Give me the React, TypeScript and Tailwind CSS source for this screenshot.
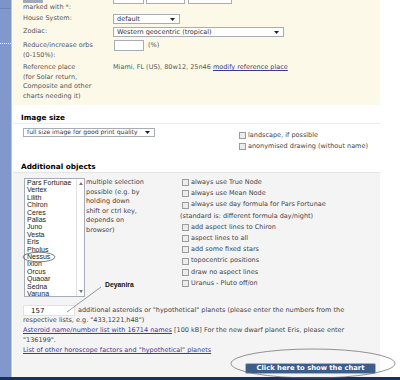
import React from "react";

const Arrow = () => (
  <svg width="5" height="3" viewBox="0 0 5 3" className="shrink-0">
    <path d="M0 0h5L2.5 3z" fill="#222" />
  </svg>
);

function Select({ value, className }: { value: string; className: string }) {
  return (
    <div
      className={`flex items-center justify-between border border-[#a9adb3] bg-white pl-[3px] pr-[4px] text-[#333] ${className}`}
    >
      <span className="truncate leading-none">{value}</span>
      <Arrow />
    </div>
  );
}

function Check({ children }: { children?: React.ReactNode }) {
  return (
    <div className="flex items-center gap-[2px] pl-[2px] whitespace-nowrap">
      <span className="w-[7px] h-[7px] shrink-0 border border-[#9c9c9c] bg-[#ececec]" />
      <span>{children}</span>
    </div>
  );
}

const objects = [
  "Pars Fortunae",
  "Vertex",
  "Lilith",
  "Chiron",
  "Ceres",
  "Pallas",
  "Juno",
  "Vesta",
  "Eris",
  "Pholus",
  "Nessus",
  "Ixion",
  "Orcus",
  "Quaoar",
  "Sedna",
  "Varuna",
];

const options = [
  "always use True Node",
  "always use Mean Node",
  "always use day formula for Pars Fortunae",
  null,
  "add aspect lines to Chiron",
  "aspect lines to all",
  "add some fixed stars",
  "topocentric positions",
  "draw no aspect lines",
  "Uranus - Pluto off/on",
];

export default function App() {
  return (
    <div className="relative w-[400px] h-[380px] overflow-hidden bg-white font-['DejaVu_Sans',Verdana,sans-serif] text-[6.5px] text-[#444]">
      <div className="flex h-[377px]">
        {/* left nav strip */}
        <div className="w-[11px] shrink-0 bg-[#8198cc] flex flex-col">
          <div className="h-[8px] bg-[#7d94c9]" />
          <div className="h-[1px] bg-[#6c83b9]" />
        </div>
        <div className="w-[1px] shrink-0 bg-[#b9c6e3]" />
        <div className="w-[1px] shrink-0 bg-white" />

        <div className="w-[367px] shrink-0 flex flex-col">
          {/* chart options */}
          <div className="h-[105px] shrink-0 bg-[#fdf9e9] pl-[10px] overflow-hidden text-[#555]">
            <div className="flex h-[12px]">
              <div className="w-[90px] shrink-0 flex flex-col">
                <div className="w-[20px] h-[3px] bg-[#a3a9b9]" />
                <div className="leading-[9px]">marked with *:</div>
              </div>
              <div className="flex items-start">
                <div className="w-[31px] h-[4px] border border-t-0 border-[#a9adb3] bg-white" />
                <div className="ml-[2px] w-[39px] h-[4px] border border-t-0 border-[#a9adb3] bg-white" />
                <div className="ml-[3px] w-[44px] h-[4px] border border-t-0 border-[#a9adb3] bg-white" />
              </div>
            </div>
            <div className="flex items-center h-[10px] mt-[2px]">
              <div className="w-[90px] shrink-0">House System:</div>
              <Select value="default" className="w-[67px] h-[10px]" />
            </div>
            <div className="flex items-center h-[10px] mt-[3px]">
              <div className="w-[90px] shrink-0">Zodiac:</div>
              <Select value="Western geocentric (tropical)" className="w-[171px] h-[10px]" />
            </div>
            <div className="flex items-start mt-[3px]">
              <div className="w-[90px] shrink-0 leading-[10px]">
                Reduce/increase orbs
                <br />
                (0-150%):
              </div>
              <div className="ml-[1px] w-[30px] h-[11px] border border-[#a9adb3] bg-white" />
              <span className="ml-[4px] leading-[11px]">(%)</span>
            </div>
            <div className="flex items-start mt-[3px]">
              <div className="w-[90px] shrink-0 leading-[9.7px]">
                Reference place
                <br />
                (for Solar return,
                <br />
                Composite and other
                <br />
                charts needing it)
              </div>
              <div className="leading-[9.7px]">
                Miami, FL (US), 80w12, 25n46{" "}
                <a className="text-[#3e3a8e] underline">modify reference place</a>
              </div>
            </div>
          </div>

          {/* image size */}
          <div className="pl-[8px] mt-[8px] h-[10px] leading-[10px] font-bold text-[7.3px] text-black">
            Image size
          </div>
          <div className="h-[39px] shrink-0 border-t border-[#ececec] flex pl-[10px]">
            <Select
              value="full size image for good print quality"
              className="mt-[4px] w-[132px] h-[9px] shrink-0 text-[6.1px]"
            />
            <div className="ml-[82px] mt-[6px] leading-[11px]">
              <Check>landscape, if possible</Check>
              <Check>anonymised drawing (without name)</Check>
            </div>
          </div>

          {/* additional objects */}
          <div className="pl-[8px] h-[10px] leading-[10px] font-bold text-[7.3px] text-black">
            Additional objects
          </div>
          <div className="flex-1 bg-[#f4f4f4] border-t border-[#e4e4e4] pl-[11px] pt-[5px] text-[#444]">
            <div className="grid grid-cols-[61px_95px_180px] items-start">
              <div className="h-[119px] border border-[#a5acb8] bg-white flex overflow-hidden">
                <div className="flex-1 pl-[2px] font-['Liberation_Sans',Arial,sans-serif] text-[7px] leading-[7.4px] text-[#1a1a1a]">
                  {objects.map((o) => (
                    <div key={o}>{o}</div>
                  ))}
                </div>
                <div className="w-[8px] border-l border-[#e2e2e2] flex flex-col items-center justify-between py-[3px]">
                  <svg width="4" height="3" viewBox="0 0 4 3">
                    <path d="M0 3h4L2 0z" fill="#777" />
                  </svg>
                  <svg width="4" height="3" viewBox="0 0 4 3">
                    <path d="M0 0h4L2 3z" fill="#777" />
                  </svg>
                </div>
              </div>
              <div className="pl-[1px] leading-[9.5px]">
                multiple selection
                <br />
                possible (e.g. by
                <br />
                holding down
                <br />
                shift or ctrl key,
                <br />
                depends on
                <br />
                browser)
              </div>
              <div className="-mt-[1px] leading-[11.2px] whitespace-nowrap">
                {options.map((o, i) =>
                  o ? (
                    <Check key={i}>{o}</Check>
                  ) : (
                    <div key={i}>(standard is: different formula day/night)</div>
                  )
                )}
              </div>
            </div>

            <div className="-ml-[1px] mt-[8px]">
              <div className="flex items-center h-[11px]">
                <div className="w-[52px] h-[11px] shrink-0 border border-[#e2e2e2] bg-white pl-[7px] leading-[10px] text-[7px] text-[#111]">
                  157
                </div>
                <span className="ml-[3px] whitespace-nowrap">
                  additional asteroids or "hypothetical" planets (please enter the numbers from the
                </span>
              </div>
              <div className="-mt-[1px] leading-[10px]">
                respective lists, e.g. "433,1221,h48")
                <br />
                <a className="text-[#3e3a96] underline">Asteroid name/number list with 16714 names</a>{" "}
                [100 kB] For the new dwarf planet Eris, please enter
                <br />
                "136199".
                <br />
                <a className="text-[#3e3a96] underline">
                  List of other horoscope factors and "hypothetical" planets
                </a>
              </div>
            </div>

            <div className="flex justify-end pr-[4px] mt-[8px]">
              <button className="w-[131px] h-[11px] rounded-[2px] border border-[#9fb2cf] bg-[#3c5d8c] text-white font-bold text-[6.8px] leading-none">
                Click here to show the chart
              </button>
            </div>
          </div>
        </div>
      </div>
      <div className="h-[3px] bg-[#17325a]" />

      {/* hand-drawn annotations */}
      <div className="absolute left-[105px] top-[281px] font-['Liberation_Sans',Arial,sans-serif] font-bold text-[6.8px] leading-[8px] text-[#111]">
        Deyanira
      </div>
      <svg
        className="absolute inset-0 pointer-events-none"
        width="400"
        height="380"
        viewBox="0 0 400 380"
      >
        <line x1="0" y1="43.5" x2="20" y2="43.5" stroke="#ffffff" strokeWidth="1" strokeDasharray="1 1" />
        <ellipse cx="39" cy="257" rx="16" ry="4.8" fill="none" stroke="#444" strokeWidth="0.7" />
        <line x1="101" y1="287" x2="67" y2="312" stroke="#555" strokeWidth="0.6" />
        <ellipse cx="313" cy="363.5" rx="82" ry="14.5" fill="none" stroke="#666" strokeWidth="0.7" />
      </svg>
    </div>
  );
}
